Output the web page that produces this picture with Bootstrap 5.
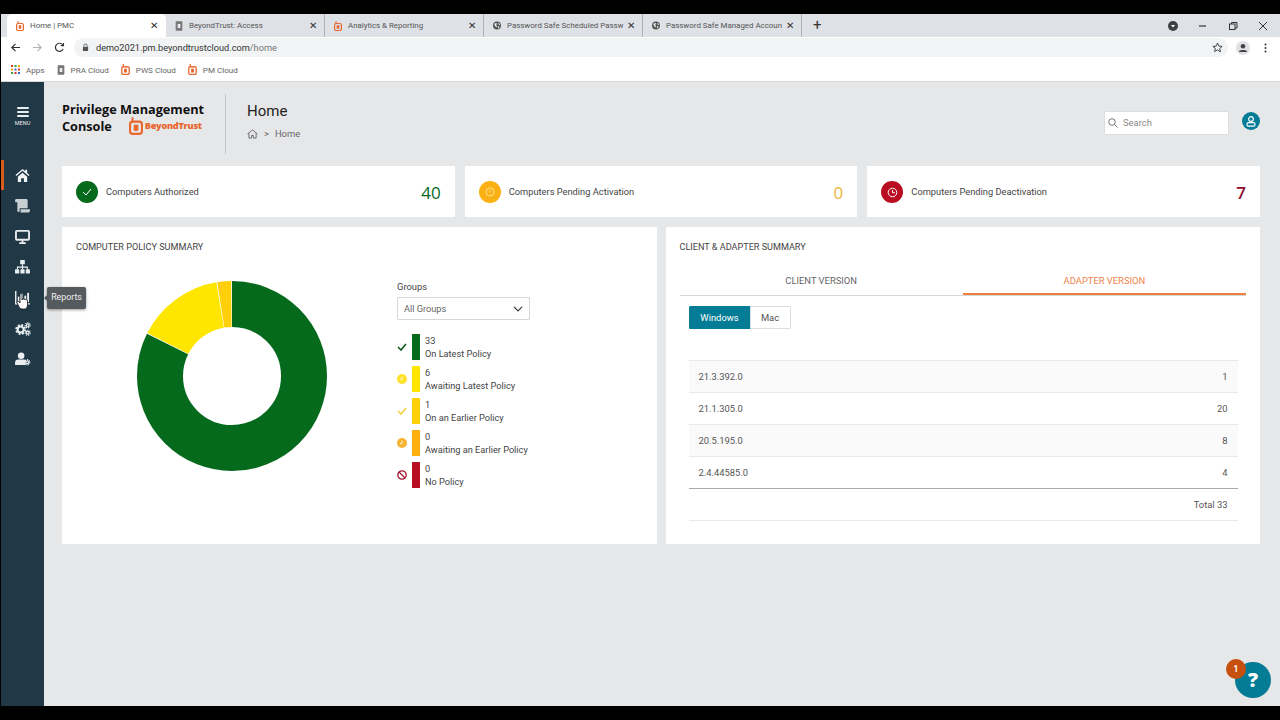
<!DOCTYPE html>
<html lang="en">
<head>
  <meta charset="UTF-8" />
  <title>Home | PMC</title>
  <link rel="stylesheet" href="https://cdn.jsdelivr.net/npm/bootstrap@5.3.3/dist/css/bootstrap.min.css" />
  <style>
    html, body { height: 720px; overflow: hidden; }
    body { background: #000; font-family: Roboto, "Liberation Sans", sans-serif; font-size: 9.5px; color: #444; }
    svg { display: block; flex: none; }

    /* browser chrome */
    .black-bar { height: 14px; background: #000; }
    .tab-strip { height: 23px; background: #dee1e6; padding-left: 6px; margin-left: 1px; }
    .chrome-tab { width: 159px; height: 23px; padding-left: 9px; color: #555; font-size: 7.9px; position: relative; border-right: 1px solid #aeb1b6; }
    .chrome-tab.current { background: #fff; border-right: 0; border-radius: 5px 5px 0 0; }
    .chrome-tab .title { margin-left: 6px; width: 119px; flex: none; white-space: nowrap; }
    .chrome-tab .tab-x { margin-left: 1px; color: #333; font-size: 10px; line-height: 1; }
    .new-tab { margin-left: 11px; font-size: 15px; color: #333; line-height: 1; }
    .win-controls { margin-left: auto; gap: 20px; padding-right: 12px; color: #333; }
    .toolbar { height: 21px; background: #fff; margin-left: 1px; padding-left: 9px; padding-right: 13px; }
    .tb-btn { margin-left: 11px; }
    .omnibox { width: 1154px; height: 19px; margin-left: 9px; background: #f1f3f4; border-radius: 10px; padding-left: 8px; font-size: 9.2px; color: #333; }
    .omnibox .url { margin-left: 7px; padding-top: 1px; }
    .omnibox .url-rest { color: #777; }
    .omnibox .star { margin-right: 5px; }
    .tb-avatar { margin-left: 8px; }
    .tb-dots { margin-left: 14px; }
    .bookmarks { height: 24px; background: #fff; margin-left: 1px; padding: 1px 0 0 10px; border-bottom: 1px solid #d8d8d8; font-size: 8.1px; color: #666; gap: 12px; }
    .bm-item { gap: 6px; }

    /* app frame */
    .app { height: 624px; margin-left: 1px; position: relative; background: #e6e7e9; }
    .side { width: 43px; background: #213847; color: #e9eef0; }
    .menu-btn { height: 78px; padding-top: 25px; font-size: 5.5px; line-height: 1; }
    .side-item { height: 30.7px; position: relative; }
    .side-item.active::before { content: ""; position: absolute; left: 0; top: 0; width: 3px; height: 30px; background: #d85c1e; }
    .side-tip { position: absolute; z-index: 5; left: 46px; top: 205px; height: 22px; width: 39px; background: #555a5e; color: #eee; font-size: 8.8px; border-radius: 2px; box-shadow: 0 1px 3px rgba(0,0,0,.4); }
    .side-tip::before { content: ""; position: absolute; left: -3px; top: 8px; border: 3px solid transparent; border-left: 0; border-right-color: #555a5e; }
    .hand { position: absolute; z-index: 6; left: 15px; top: 211px; }

    .main { padding: 0 20px 0 18px; }
    .page-head { height: 84px; }
    .brand { width: 163px; margin-bottom: 12px; font-family: "Open Sans", sans-serif; font-size: 12.7px; font-weight: 700; color: #111; line-height: 16px; white-space: nowrap; }
    .brand-logo { margin-left: 17px; color: #e8682f; font-size: 9.2px; font-weight: 800; letter-spacing: -.3px; gap: 2px; }
    .head-title { height: 60px; border-left: 1px solid #c4c6c8; padding: 7px 0 0 21px; }
    .head-title h1 { font-size: 15px; font-weight: 400; color: #222; margin: 0 0 6px; line-height: 20px; }
    .page-head .breadcrumb { font-size: 9.4px; color: #666; margin: 0; --bs-breadcrumb-divider: '>'; --bs-breadcrumb-divider-color: #666; --bs-breadcrumb-item-padding-x: 6px; }
    .page-head .breadcrumb-item.active { color: #666; }
    .search-box { width: 123px; height: 22px; margin-bottom: 2px; background: #fff; box-shadow: 0 0 1px rgba(0,0,0,.25); padding-left: 3px; gap: 5px; color: #888; font-size: 9.4px; }
    .avatar { width: 18px; height: 18px; background: #047c96; margin: 0 0 6px 14px; }

    .stat-row { --bs-gutter-x: 10px; margin-bottom: 10px; }
    .stat { height: 51px; border: 0; border-radius: 0; padding: 1px 14px 0; font-size: 9.3px; color: #444; gap: 8px; }
    .stat-icon { width: 22px; height: 22px; }
    .stat-num { margin-left: auto; font-family: "Open Sans", sans-serif; font-size: 17px; line-height: 1; }
    .ok-bg { background: #066a1c; } .warn-bg { background: #fbb014; } .bad-bg { background: #b90d22; }
    .ok-text { color: #066a1c; } .warn-text { color: #eeb23a; } .bad-text { color: #8e0b2a; font-weight: 600; }

    .panels { --bs-gutter-x: 9px; }
    .panel { height: 317px; border: 0; border-radius: 0; padding: 14px; }
    .panel-title { font-size: 9.1px; color: #444; line-height: 13px; }
    .donut { margin: 27px 0 0 61px; }
    .policy-side { width: 133px; margin: 26px 0 0 70px; }
    .policy-side .lbl { font-size: 9.4px; line-height: 13px; margin-bottom: 4px; }
    .policy-side .form-select { height: 23px; font-size: 9.2px; padding: 1px 6px 0; border-radius: 1px; color: #666; border-color: #d5d6d8; background-size: 12px 10px; background-position: right 5px center; }
    .legend { margin-top: 11px; width: 150px; }
    .legend-row { height: 32px; }
    .legend-row .ic { width: 15px; }
    .legend-row .swatch { width: 8px; height: 26px; margin-right: 5px; }
    .legend-row .txt { padding-top: 1px; font-size: 9.2px; line-height: 12.5px; color: #444; white-space: nowrap; }

    .panel .nav-tabs { margin-top: 14px; border-bottom: 1px solid #d5d6d8; --bs-nav-tabs-border-width: 0; }
    .panel .nav-tabs .nav-link { height: 27px; padding: 6px 0 0; font-size: 9.4px; color: #666; border: 0; border-radius: 0; background: none; text-align: center; }
    .panel .nav-tabs .nav-link.active { color: #f0834b; border-bottom: 2px solid #ef7f3f; }
    .os-group { margin: 10px 0 0 9px; }
    .os-group .btn { height: 23px; padding: 1px 0 0; font-size: 9.4px; border-radius: 1px; }
    .btn-win { width: 62px; background: #047c96; border-color: #047c96; color: #fff; }
    .btn-mac { width: 41px; background: #fff; border-color: #dcdde0; color: #555; }
    .ver-table { margin: 31px 9px 0 9px; width: 549px; font-size: 9.4px; border-top: 1px solid #e9e9e9; --bs-table-striped-bg: #fafafa; --bs-table-color: #555; --bs-table-striped-color: #555; }
    .ver-table td { height: 32px; padding: 1px 10px 0; vertical-align: middle; border-color: #e9e9e9; }
    .ver-table tr.last-ver td { border-bottom-color: #aaa; }
    .ver-table>tbody>tr.total-row>td { --bs-table-bg-type: transparent; --bs-table-accent-bg: transparent; }

    .help { position: absolute; left: 1234px; top: 580px; width: 36px; height: 36px; background: #047c96; color: #fff; font-family: "Open Sans", sans-serif; font-size: 20px; font-weight: 800; line-height: 1; }
    .help-badge { position: absolute; left: 1225px; top: 577px; width: 20px; height: 20px; background: #c8500f; color: #fff; font-size: 8.5px; font-weight: 700; }
  </style>
</head>
<body>
  <svg width="0" height="0" class="position-absolute">
    <symbol id="bt" viewBox="0 0 16 20">
      <path d="M4 0v5" stroke="#e8682f" stroke-width="2.2" fill="none"/>
      <rect x="1.2" y="5" width="13.6" height="14" rx="3" stroke="#e8682f" stroke-width="2.4" fill="none"/>
      <rect x="5.4" y="8.5" width="5.2" height="7" fill="#e8682f"/>
    </symbol>
    <symbol id="pra" viewBox="0 0 12 14">
      <rect x="1" y="0" width="10" height="14" rx="1" fill="#777"/>
      <rect x="4" y="4" width="4" height="6" fill="#eee"/>
    </symbol>
    <symbol id="globe" viewBox="0 0 16 16">
      <circle cx="8" cy="8" r="8" fill="#555"/>
      <path d="M3 4l4-1 1 2-2 2 2 2-1 3-2-2-2-3zM10 3l3 1 1 3-2 0zM10 10l3-1-1 4-2 1z" fill="#eee"/>
    </symbol>
  </svg>

  <div class="black-bar"></div>

  <div class="tab-strip d-flex align-items-center">
    <div class="chrome-tab current d-flex align-items-center">
      <svg width="8" height="10"><use href="#bt"/></svg><span class="title">Home | PMC</span><span class="tab-x">&#10005;</span>
    </div>
    <div class="chrome-tab d-flex align-items-center">
      <svg width="8" height="10"><use href="#pra"/></svg><span class="title">BeyondTrust: Access</span><span class="tab-x">&#10005;</span>
    </div>
    <div class="chrome-tab d-flex align-items-center">
      <svg width="8" height="10"><use href="#bt"/></svg><span class="title">Analytics &amp; Reporting</span><span class="tab-x">&#10005;</span>
    </div>
    <div class="chrome-tab d-flex align-items-center">
      <svg width="8" height="9"><use href="#globe"/></svg><span class="title">Password Safe Scheduled Passw</span><span class="tab-x">&#10005;</span>
    </div>
    <div class="chrome-tab d-flex align-items-center">
      <svg width="8" height="9"><use href="#globe"/></svg><span class="title">Password Safe Managed Accoun</span><span class="tab-x">&#10005;</span>
    </div>
    <span class="new-tab">+</span>
    <div class="win-controls d-flex align-items-center">
      <svg width="10" height="10" viewBox="0 0 10 10"><circle cx="5" cy="5" r="5" fill="#3c4043"/><path d="M3 4h4L5 6.5z" fill="#fff"/></svg>
      <svg width="10" height="10" viewBox="0 0 10 10"><path d="M1 5h7" stroke="#333" stroke-width="1.2"/></svg>
      <svg width="10" height="10" viewBox="0 0 10 10" fill="none" stroke="#333"><rect x="1.5" y="3" width="5.5" height="5.5"/><path d="M3.5 3V1.5H9V7H7"/></svg>
      <svg width="10" height="10" viewBox="0 0 10 10"><path d="M1 1l8 8M9 1l-8 8" stroke="#333"/></svg>
    </div>
  </div>

  <div class="toolbar d-flex align-items-center">
    <svg width="11" height="11" viewBox="0 0 12 12" fill="none" stroke="#333" stroke-width="1.3"><path d="M11 6H2M6 2L2 6l4 4"/></svg>
    <svg class="tb-btn" width="11" height="11" viewBox="0 0 12 12" fill="none" stroke="#b5b5b5" stroke-width="1.3"><path d="M1 6h9M6 2l4 4-4 4"/></svg>
    <svg class="tb-btn" width="11" height="11" viewBox="0 0 12 12" fill="none" stroke="#333" stroke-width="1.3"><path d="M10 7.5A4.4 4.4 0 1 1 9.4 3M10.3 1v3h-3"/></svg>
    <div class="omnibox d-flex align-items-center">
      <svg width="7" height="9" viewBox="0 0 8 10"><path d="M2 4V3a2 2 0 0 1 4 0v1" fill="none" stroke="#555"/><rect x="1" y="4" width="6" height="5" rx="1" fill="#555"/></svg>
      <span class="url">demo2021.pm.beyondtrustcloud.com<span class="url-rest">/home</span></span>
      <svg class="star ms-auto" width="11" height="11" viewBox="0 0 16 16" fill="none" stroke="#333" stroke-width="1.3"><path d="M8 1.5l2 4.4 4.7.5-3.500 3.200 1 4.700L8 11.500l-4.200 2.300 1-4.700L1.300 6.400 6 5.900z"/></svg>
    </div>
    <svg class="tb-avatar" width="14" height="14" viewBox="0 0 14 14"><circle cx="7" cy="7" r="7" fill="#dfe1e5"/><circle cx="7" cy="5.200" r="2.300" fill="#444"/><path d="M3 10.500c0-2 8-2 8 0v.5H3z" fill="#444"/></svg>
    <svg class="tb-dots" width="3" height="10" viewBox="0 0 3 10" fill="#333"><circle cx="1.500" cy="1.500" r="1"/><circle cx="1.500" cy="5" r="1"/><circle cx="1.500" cy="8.500" r="1"/></svg>
  </div>

  <div class="bookmarks d-flex align-items-center">
    <span class="bm-item d-flex align-items-center">
      <svg width="9" height="9" viewBox="0 0 9 9"><rect width="2" height="2" fill="#d33"/><rect x="3.500" width="2" height="2" fill="#3a3"/><rect x="7" width="2" height="2" fill="#e8a800"/><rect y="3.500" width="2" height="2" fill="#e8a800"/><rect x="3.500" y="3.500" width="2" height="2" fill="#36c"/><rect x="7" y="3.500" width="2" height="2" fill="#d33"/><rect y="7" width="2" height="2" fill="#3a3"/><rect x="3.500" y="7" width="2" height="2" fill="#d33"/><rect x="7" y="7" width="2" height="2" fill="#36c"/></svg>
      Apps
    </span>
    <span class="bm-item d-flex align-items-center"><svg width="8" height="10"><use href="#pra"/></svg>PRA Cloud</span>
    <span class="bm-item d-flex align-items-center"><svg width="9" height="11"><use href="#bt"/></svg>PWS Cloud</span>
    <span class="bm-item d-flex align-items-center"><svg width="9" height="11"><use href="#bt"/></svg>PM Cloud</span>
  </div>

  <div class="app d-flex">
    <aside class="side d-flex flex-column">
      <div class="menu-btn d-flex flex-column align-items-center">
        <svg width="12" height="10" viewBox="0 0 12 10" fill="#e9eef0"><rect width="12" height="2" rx="1"/><rect y="4" width="12" height="2" rx="1"/><rect y="8" width="12" height="2" rx="1"/></svg>
        <span class="mt-1">MENU</span>
      </div>
      <div class="side-item active d-flex align-items-center justify-content-center">
        <svg width="15" height="14" viewBox="0 0 16 15" fill="#f2f5f6"><path d="M8 1L.5 7.500l1 1.100L8 3l6.500 5.600 1-1.100L13 5.300V2h-2v1.600z"/><path d="M3 9.500L8 5l5 4.500V15H9.500v-4h-3v4H3z"/></svg>
      </div>
      <div class="side-item d-flex align-items-center justify-content-center">
        <svg width="15" height="14" viewBox="0 0 16 15" fill="#c8d0d4"><path d="M0 1.500A1.500 1.500 0 0 1 1.500 0H12a1.500 1.500 0 0 1 1.500 1.500V10H5v2.500A2 2 0 0 1 3.500 14 1.500 1.500 0 0 1 2.500 12V3.500H1A1 1 0 0 1 0 2.500z"/><path d="M6 11h10v1.500a2 2 0 0 1-2 2H5.500A3 3 0 0 0 6 13z"/></svg>
      </div>
      <div class="side-item d-flex align-items-center justify-content-center">
        <svg width="15" height="14" viewBox="0 0 16 15" fill="none" stroke="#e9eef0" stroke-width="2"><rect x="1" y="1" width="14" height="9.500" rx="1"/><path d="M8 11v2.500M4.500 14h7"/></svg>
      </div>
      <div class="side-item d-flex align-items-center justify-content-center">
        <svg width="15" height="14" viewBox="0 0 16 15" fill="#e9eef0"><rect x="5.500" y="0" width="5" height="4.500" rx=".6"/><rect x="0" y="10" width="4.500" height="4.500" rx=".6"/><rect x="5.750" y="10" width="4.500" height="4.500" rx=".6"/><rect x="11.500" y="10" width="4.500" height="4.500" rx=".6"/><path d="M7.400 4.500h1.200V7h5.200v3h-1.200V8.200H8.600V10H7.400V8.200H3.200V10H2V7h5.400z"/></svg>
      </div>
      <div class="side-item d-flex align-items-center justify-content-center">
        <svg width="15" height="14" viewBox="0 0 16 15" fill="#e9eef0"><path d="M0 0h1.500v13H16v1.500H0z"/><rect x="3" y="6" width="2" height="6"/><rect x="6.500" y="3" width="2" height="9"/><rect x="10" y="5" width="2" height="7"/><rect x="13" y="2" width="2" height="10"/></svg>
      </div>
      <div class="side-item d-flex align-items-center justify-content-center">
        <svg width="16" height="14" viewBox="0 0 17 15" fill="none" stroke="#e9eef0"><circle cx="6" cy="8" r="3.200" stroke-width="2.200"/><circle cx="6" cy="8" r="4.900" stroke-width="1.800" stroke-dasharray="2.200 1.650"/><circle cx="13.500" cy="3.500" r="1.500" stroke-width="1.400"/><circle cx="13.500" cy="3.500" r="2.700" stroke-width="1.200" stroke-dasharray="1.300 1.100"/><circle cx="13.500" cy="11.500" r="1.500" stroke-width="1.400"/><circle cx="13.500" cy="11.500" r="2.700" stroke-width="1.200" stroke-dasharray="1.300 1.100"/></svg>
      </div>
      <div class="side-item d-flex align-items-center justify-content-center">
        <svg width="16" height="14" viewBox="0 0 17 15"><circle cx="6.500" cy="4" r="3.500" fill="#e9eef0"/><path d="M0 14v-2.500A3.500 3.500 0 0 1 3.500 8h6c.7 0 1.300.2 1.800.5V14z" fill="#e9eef0"/><circle cx="13" cy="11" r="1.500" fill="none" stroke="#e9eef0" stroke-width="1.400"/><circle cx="13" cy="11" r="2.800" fill="none" stroke="#e9eef0" stroke-width="1.300" stroke-dasharray="1.400 1.100"/></svg>
      </div>
    </aside>

    <div class="side-tip d-flex align-items-center justify-content-center">Reports</div>
    <svg class="hand" width="13" height="17" viewBox="0 0 13 17"><path d="M4 1.500c0-1.300 2-1.300 2 0V7l.5-1.200c1-.3 1.500.2 1.500.9.400-.8 1.700-.6 1.800.3.600-.5 1.700-.2 1.700.8v4.200c0 2-1.200 4-3 4H6c-1.500 0-2.200-1-3-2.300L1 9.700c-.6-1 .8-2 1.600-1.200L4 10z" fill="#fff" stroke="#111" stroke-width=".8"/></svg>

    <main class="main flex-grow-1">
      <div class="page-head d-flex align-items-center">
        <div class="brand">
          Privilege Management
          <div class="d-flex align-items-center">Console
            <span class="brand-logo d-flex align-items-center"><svg width="14" height="18"><use href="#bt"/></svg>BeyondTrust</span>
          </div>
        </div>
        <div class="head-title">
          <h1>Home</h1>
          <ol class="breadcrumb align-items-center">
            <li class="breadcrumb-item d-flex align-items-center"><svg width="11" height="10" viewBox="0 0 12 11" fill="none" stroke="#666"><path d="M.5 5.500L6 1l5.500 4.500M2 4.500V10h3V7h2v3h3V4.500"/></svg></li>
            <li class="breadcrumb-item active">Home</li>
          </ol>
        </div>
        <div class="search-box ms-auto d-flex align-items-center">
          <svg width="10" height="10" viewBox="0 0 10 10" fill="none" stroke="#777"><circle cx="4" cy="4" r="3.300"/><path d="M6.500 6.500L9.500 9.500"/></svg>
          Search
        </div>
        <div class="avatar rounded-circle d-flex align-items-center justify-content-center">
          <svg width="10" height="11" viewBox="0 0 10 11" fill="none" stroke="#fff" stroke-width="1.200"><circle cx="5" cy="3" r="2.300"/><rect x="1" y="6.700" width="8" height="3.500" rx="1.500"/></svg>
        </div>
      </div>

      <div class="row stat-row">
        <div class="col">
          <div class="card stat flex-row align-items-center">
            <span class="stat-icon ok-bg rounded-circle d-flex align-items-center justify-content-center">
              <svg width="10" height="8" viewBox="0 0 10 8" fill="none" stroke="#fff" stroke-width="1"><path d="M1 4l3 3 5-6"/></svg>
            </span>
            Computers Authorized
            <span class="stat-num ok-text">40</span>
          </div>
        </div>
        <div class="col">
          <div class="card stat flex-row align-items-center">
            <span class="stat-icon warn-bg rounded-circle d-flex align-items-center justify-content-center">
              <svg width="10" height="10" viewBox="0 0 10 10" fill="none" stroke="#fde08a"><circle cx="5" cy="5" r="4"/><path d="M5 3v2.500"/></svg>
            </span>
            Computers Pending Activation
            <span class="stat-num warn-text">0</span>
          </div>
        </div>
        <div class="col">
          <div class="card stat flex-row align-items-center">
            <span class="stat-icon bad-bg rounded-circle d-flex align-items-center justify-content-center">
              <svg width="11" height="11" viewBox="0 0 11 11" fill="none" stroke="#fff"><circle cx="5.500" cy="5.500" r="4.300"/><path d="M5.500 3v2.700h2.300"/></svg>
            </span>
            Computers Pending Deactivation
            <span class="stat-num bad-text">7</span>
          </div>
        </div>
      </div>

      <div class="row panels">
        <div class="col-6">
          <div class="card panel">
            <div class="panel-title">COMPUTER POLICY SUMMARY</div>
            <div class="d-flex">
              <svg class="donut" width="190" height="190" viewBox="0 0 190 190">
                <g id="donut" transform="rotate(-90 95 95)" fill="none" stroke-width="46"></g>
              </svg>
              <div class="policy-side">
                <div class="lbl">Groups</div>
                <select class="form-select"><option>All Groups</option></select>
                <div class="legend" id="legend"></div>
              </div>
            </div>
          </div>
        </div>
        <div class="col-6">
          <div class="card panel">
            <div class="panel-title">CLIENT &amp; ADAPTER SUMMARY</div>
            <ul class="nav nav-tabs nav-justified">
              <li class="nav-item"><a class="nav-link" href="#">CLIENT VERSION</a></li>
              <li class="nav-item"><a class="nav-link active" href="#">ADAPTER VERSION</a></li>
            </ul>
            <div class="btn-group os-group align-self-start">
              <button type="button" class="btn btn-win">Windows</button>
              <button type="button" class="btn btn-mac">Mac</button>
            </div>
            <table class="table table-striped ver-table">
              <tbody>
                <tr><td>21.3.392.0</td><td class="text-end">1</td></tr>
                <tr><td>21.1.305.0</td><td class="text-end">20</td></tr>
                <tr><td>20.5.195.0</td><td class="text-end">8</td></tr>
                <tr class="last-ver"><td>2.4.44585.0</td><td class="text-end">4</td></tr>
                <tr class="total-row"><td></td><td class="text-end">Total 33</td></tr>
              </tbody>
            </table>
          </div>
        </div>
      </div>
    </main>

    <div class="help rounded-circle d-flex align-items-center justify-content-center">?</div>
    <div class="help-badge rounded-circle d-flex align-items-center justify-content-center">1</div>
  </div>

  <script>
    // donut slices: 33 / 6 / 1 of 40
    const slices = [[33, '#066a1c'], [6, '#ffe600'], [1, '#ffcf0a']];
    const total = 40;
    const donut = document.getElementById('donut');
    let used = 0;
    slices.forEach(function (s) {
      const c = document.createElementNS('http://www.w3.org/2000/svg', 'circle');
      c.setAttribute('cx', 95);
      c.setAttribute('cy', 95);
      c.setAttribute('r', 72);
      c.setAttribute('pathLength', total);
      c.setAttribute('stroke', s[1]);
      c.setAttribute('stroke-dasharray', (s[0] - 0.06) + ' ' + (total - s[0] + 0.06));
      c.setAttribute('stroke-dashoffset', -used);
      donut.appendChild(c);
      used += s[0];
    });

    // legend rows
    const check = (col) => `<svg width="10" height="8" viewBox="0 0 10 8" fill="none" stroke="${col}" stroke-width="1.600"><path d="M1 4l3 3 5-6"/></svg>`;
    const clock = (col) => `<svg width="10" height="10" viewBox="0 0 10 10"><circle cx="5" cy="5" r="5" fill="${col}"/><path d="M5 2.500V5.500H3" fill="none" stroke="#fff" stroke-width=".8"/></svg>`;
    const noEntry = `<svg width="10" height="10" viewBox="0 0 10 10" fill="none" stroke="#a5152f" stroke-width="1.300"><circle cx="5" cy="5" r="4.200"/><path d="M2 2l6 6"/></svg>`;
    const rows = [
      [check('#0a5a1c'), '#066a1c', '33', 'On Latest Policy'],
      [clock('#ffe22a'), '#ffe600', '6', 'Awaiting Latest Policy'],
      [check('#f2d13c'), '#ffcf0a', '1', 'On an Earlier Policy'],
      [clock('#f5b332'), '#ffb00f', '0', 'Awaiting an Earlier Policy'],
      [noEntry, '#b90d22', '0', 'No Policy']
    ];
    document.getElementById('legend').innerHTML = rows.map(r =>
      `<div class="legend-row d-flex align-items-center">
         <span class="ic">${r[0]}</span>
         <span class="swatch" style="background:${r[1]}"></span>
         <span class="txt">${r[2]}<br>${r[3]}</span>
       </div>`).join('');
  </script>
  <script src="https://cdn.jsdelivr.net/npm/bootstrap@5.3.3/dist/js/bootstrap.bundle.min.js"></script>
</body>
</html>
